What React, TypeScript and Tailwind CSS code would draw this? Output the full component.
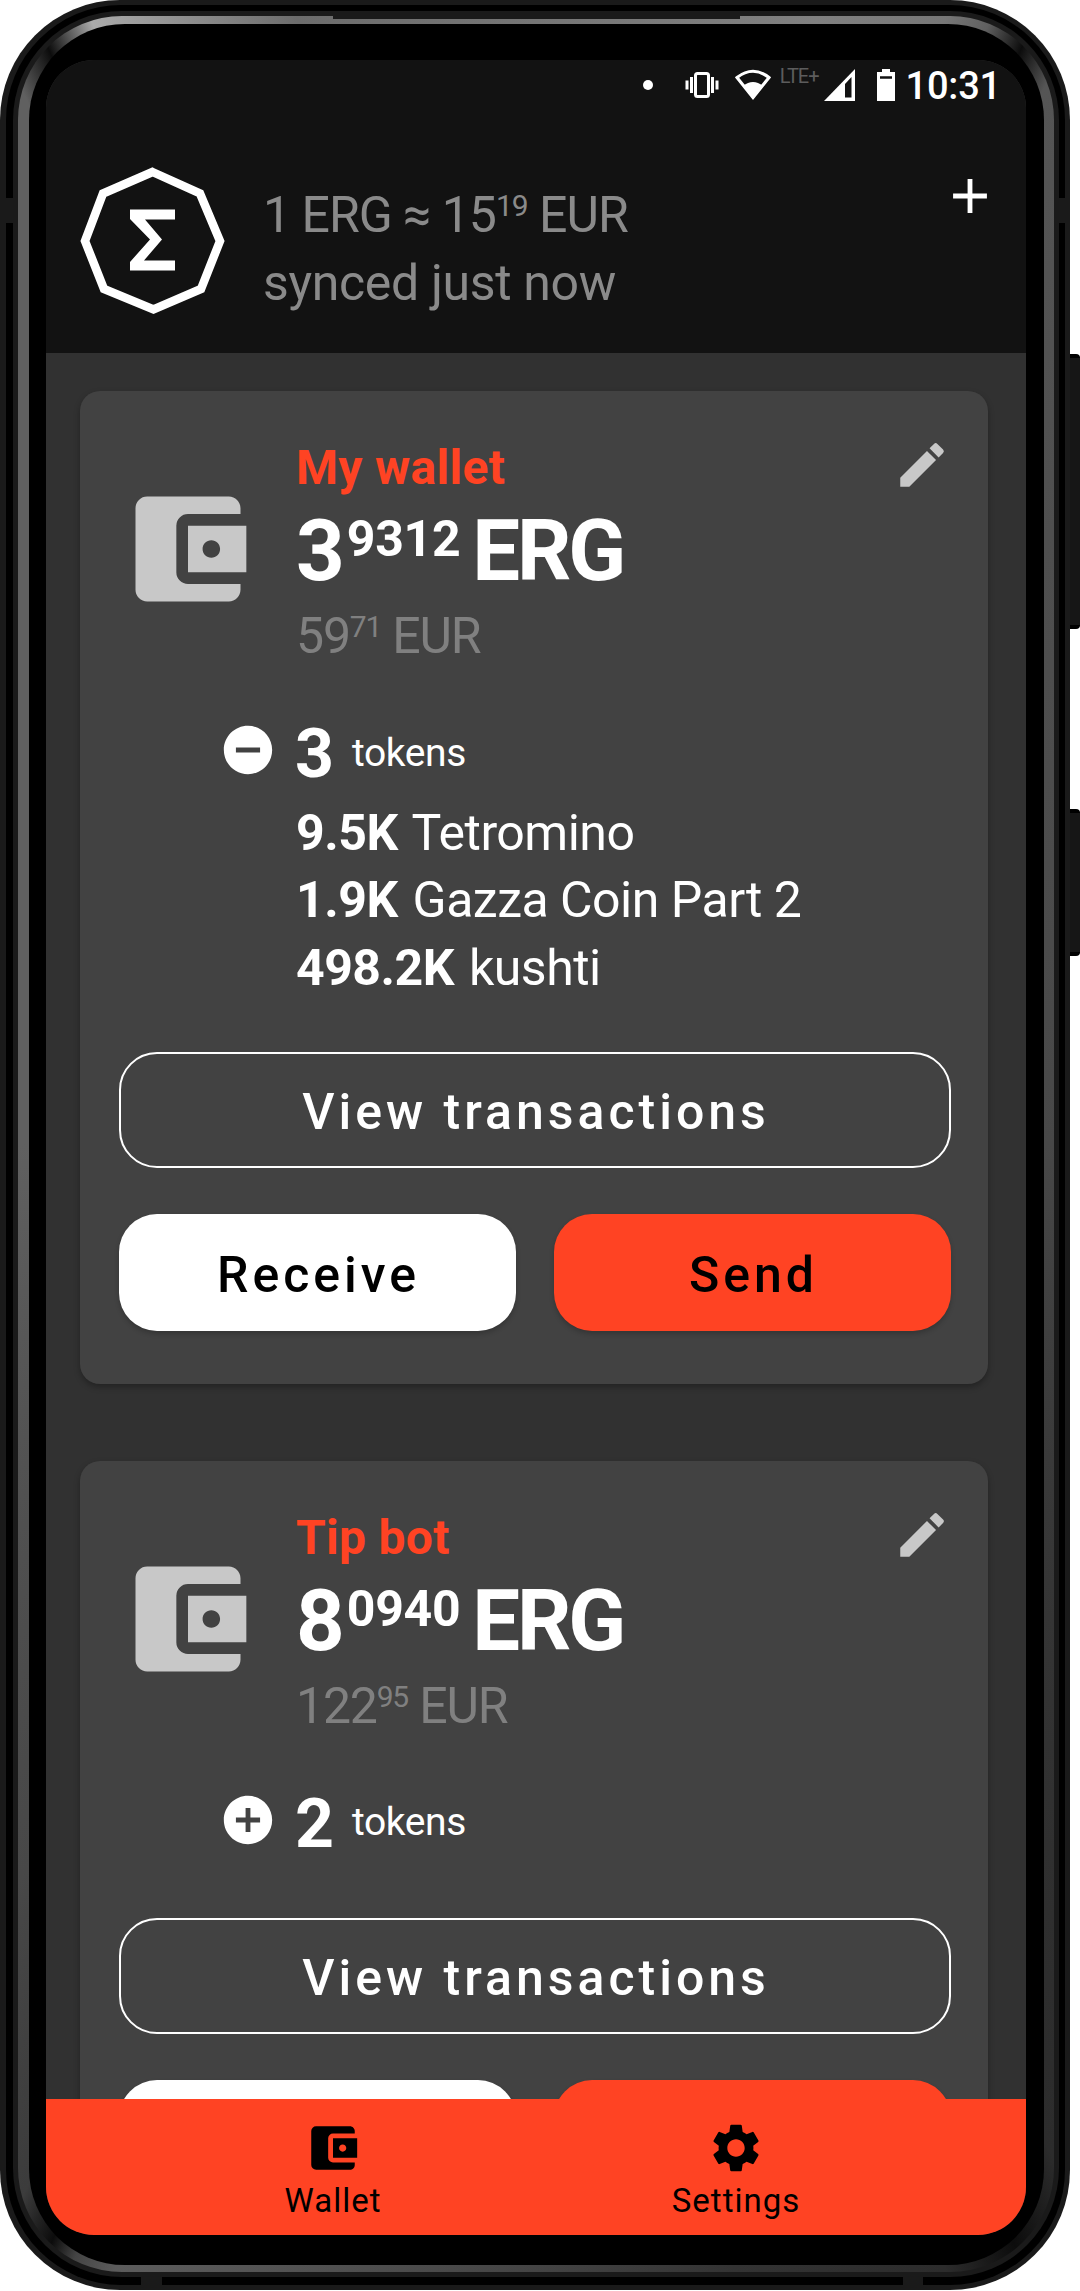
import React from "react";
import { MdAccountBalanceWallet, MdSettings, MdEdit, MdAdd, MdRemoveCircle, MdAddCircle } from "react-icons/md";

type Token = { amount: string; name: string };
type Wallet = {
  name: string;
  whole: string;
  decimals: string;
  fiatWhole: string;
  fiatCents: string;
  tokenCount: number;
  tokens: Token[];
};

const wallets: Wallet[] = [
  {
    name: "My wallet",
    whole: "3",
    decimals: "9312",
    fiatWhole: "59",
    fiatCents: "71",
    tokenCount: 3,
    tokens: [
      { amount: "9.5K", name: "Tetromino" },
      { amount: "1.9K", name: "Gazza Coin Part 2" },
      { amount: "498.2K", name: "kushti" },
    ],
  },
  {
    name: "Tip bot",
    whole: "8",
    decimals: "0940",
    fiatWhole: "122",
    fiatCents: "95",
    tokenCount: 2,
    tokens: [],
  },
];

function StatusBar() {
  return (
    <div className="flex h-[48px] items-center justify-end pr-[25px] pt-[2px] text-white">
      <span className="mr-[31px] size-[10px] rounded-full bg-white" />
      <svg className="mr-[15px] h-[26px] w-[36px]" viewBox="0 0 36 26" fill="none" stroke="#fff">
        <rect x="11.5" y="1.5" width="13" height="23" rx="2" strokeWidth="3" />
        <path d="M7.500 5v16M28.500 5v16" strokeWidth="3" />
        <path d="M3 8.500v9M33 8.500v9" strokeWidth="3" />
      </svg>
      <svg className="mr-[9px] h-[31px] w-[36px]" viewBox="0 0 36 31">
        <path d="M2 8.500Q18-4 34 8.500L18 28.500Z" fill="none" stroke="#fff" strokeWidth="3" />
        <path d="M8 17Q18 9 28 17L18 30Z" fill="#fff" />
      </svg>
      <span className="mr-[5px] -mt-[18px] text-[20px] leading-none tracking-[-1px] text-[#5c5c5c]">LTE+</span>
      <svg className="mr-[22px] h-[32px] w-[31px]" viewBox="0 0 31 32">
        <path d="M0 32L31 0V32Z" fill="#fff" />
        <path d="M21 15L27.500 8V28.500H21Z" fill="#121212" />
      </svg>
      <svg className="mr-[11px] h-[32px] w-[18px]" viewBox="0 0 18 32">
        <path d="M5 0h8v3h5v29H0V3h5z" fill="#fff" />
        <path d="M3 8.500h12" stroke="#121212" strokeWidth="2.500" />
      </svg>
      <span className="pt-[2px] text-[38px] leading-[46px] font-medium tracking-[-0.200px]">10:31</span>
    </div>
  );
}

function Header() {
  return (
    <header className="h-[293px] bg-[#121212]">
      <StatusBar />
      <div className="flex pl-[34px] pt-[58px]">
        <svg className="h-[149px] w-[145px] shrink-0" viewBox="0 0 145 149">
          <path d="M72.500 6L120 27.500L140 75L121 123L73.500 143.500L24 123L5 75L23 27.500Z" fill="none" stroke="#fff" strokeWidth="8.500" />
          <path d="M50 43.500H95V53.500H65L82 73.500L64 94.500H95V104.500H50V96L70 73.500L50 53Z" fill="#fff" />
        </svg>
        <div className="ml-[38px] pt-[15px] text-[50px] leading-[68px] text-[#8a8a8a]">
          <p className="tracking-[-1px] whitespace-nowrap">
            1 ERG ≈ 15<Sup>19</Sup> EUR
          </p>
          <p className="tracking-[-0.350px] whitespace-nowrap">synced just now</p>
        </div>
        <MdAdd className="ml-auto mr-[27px] mt-[1px] size-[58px] text-white" />
      </div>
    </header>
  );
}

function Sup({ children }: { children: React.ReactNode }) {
  return <span className="relative -top-[16px] text-[30px] leading-none">{children}</span>;
}

function WalletCard({ wallet }: { wallet: Wallet }) {
  const expanded = wallet.tokens.length > 0;
  return (
    <section className="flex w-[908px] flex-col rounded-[20px] bg-[#424242] pb-[53px] shadow-[0_3px_6px_rgba(0,0,0,0.3)]">
      <div className="flex h-[291px] pl-[38px] pt-[46px]">
        <MdAccountBalanceWallet className="mt-[42px] size-[140px] shrink-0 text-[#c8c8c8]" />
        <div className="ml-[38px] whitespace-nowrap">
          <h2 className="text-[48px] leading-[61px] font-bold tracking-[0.300px] text-[#ff4323]">{wallet.name}</h2>
          <p className="flex h-[108px] items-baseline text-[85px] leading-[106px] font-bold text-white">
            {wallet.whole}
            <span className="relative -top-[24px] ml-[2px] text-[50px] leading-none tracking-[-0.300px]">{wallet.decimals}</span>
            <span className="ml-[12px] tracking-[-3.200px]">ERG</span>
          </p>
          <p className="text-[50px] leading-[60px] tracking-[-1.200px] text-[#808080]">
            {wallet.fiatWhole}
            <Sup>{wallet.fiatCents}</Sup> EUR
          </p>
        </div>
        <MdEdit className="ml-auto mr-[37px] -mt-px size-[58px] text-[#c8c8c8]" />
      </div>
      <div className="flex h-[136px] items-center pl-[139px] text-white">
        {expanded ? <MdRemoveCircle className="mt-px size-[58px]" /> : <MdAddCircle className="mt-px size-[58px]" />}
        <span className="ml-[18px] pt-[9px] text-[68px] leading-[80px] font-bold">{wallet.tokenCount}</span>
        <span className="ml-[18px] pt-[6px] text-[39px] tracking-[-0.400px]">tokens</span>
      </div>
      {expanded && (
        <ul className="-mt-[18px] mb-[19px] pl-[216px] text-[50px] leading-[67.600px] tracking-[-0.500px] whitespace-nowrap text-white">
          {wallet.tokens.map((t) => (
            <li key={t.name}>
              <b className="mr-[3px]">{t.amount}</b> {t.name}
            </li>
          ))}
        </ul>
      )}
      <div className="pr-[37px] pl-[39px] pt-[30px] text-[50px] font-medium tracking-[4px]">
        <button className="h-[116px] w-full rounded-[38px] border-[2.500px] border-white pt-[6px] pl-[2px] text-white">
          View transactions
        </button>
        <div className="mt-[46px] grid grid-cols-2 gap-[38px] text-black">
          <button className="h-[117px] rounded-[38px] bg-white pt-[6px] pl-[2px] shadow-[0_3px_5px_rgba(0,0,0,0.2)]">Receive</button>
          <button className="h-[117px] rounded-[38px] bg-[#ff4323] pt-[6px] pl-[2px] shadow-[0_3px_5px_rgba(0,0,0,0.2)]">Send</button>
        </div>
      </div>
    </section>
  );
}

function BottomNav() {
  return (
    <nav className="flex h-[136px] shrink-0 justify-center bg-[#ff4323] pt-[20px] pr-[3px] text-[33px] leading-[40px] tracking-[1px] text-black">
      <div className="flex w-[403px] flex-col items-center">
        <MdAccountBalanceWallet className="size-[58px]" />
        <span className="mt-[4px]">Wallet</span>
      </div>
      <div className="flex w-[403px] flex-col items-center">
        <MdSettings className="size-[58px]" />
        <span className="mt-[4px]">Settings</span>
      </div>
    </nav>
  );
}

export default function App() {
  return (
    <div className="relative h-[2291px] w-[1080px] overflow-hidden bg-white font-[Roboto,sans-serif]">
      <div className="absolute top-[354px] left-[1066px] h-[275px] w-[14px] rounded-[4px] border-y-4 border-black bg-[#161616]" />
      <div className="absolute top-[809px] left-[1066px] h-[147px] w-[14px] rounded-[4px] border-y-4 border-black bg-[#161616]" />
      <div className="relative h-[2290px] w-[1070px] rounded-[120px] bg-[#1a1a1a] px-[5.500px] py-[5.300px]">
        <div className="h-full rounded-[115px] bg-black pt-[6px] pr-[5.500px] pb-[8px] pl-[7.500px]">
          <div className="h-full rounded-[109px] bg-[#1a1a1a] px-[5px] pt-[5px] pb-[5px]">
            <div className="h-full rounded-[104px] bg-[conic-gradient(#757575_0deg,#808080_14deg,#777_20deg,#606060_22deg,#0c0c0c_23.900deg,#555_25.700deg,#4f4f4f_40deg,#484848_90deg,#2c2c2c_153deg,#0c0c0c_156.500deg,#2c2c2c_160deg,#333_170deg,#444_180deg,#5c5c5c_200.500deg,#444_202.500deg,#0c0c0c_203.800deg,#3c3c3c_206deg,#484848_215deg,#606060_270deg,#606060_334deg,#0c0c0c_336deg,#aaa_338.400deg,#6c6c6c_348deg,#757575_360deg)] pt-[8px] pr-[10px] pb-[7px] pl-[11px]">
              <div className="h-full rounded-[96px] bg-black pt-[35.500px] pr-[18px] pb-[29.500px] pl-[17px]">
                <main className="flex h-full flex-col overflow-hidden rounded-[48px] bg-[#313131]">
                  <Header />
                  <div className="flex min-h-0 flex-1 flex-col gap-[77px] overflow-hidden pt-[38px] pl-[34px]">
                    {wallets.map((w) => (
                      <div key={w.name} className="shrink-0">
                        <WalletCard wallet={w} />
                      </div>
                    ))}
                  </div>
                  <BottomNav />
                </main>
              </div>
            </div>
          </div>
        </div>
      </div>
      <div className="absolute top-[11px] left-[333px] h-[8px] w-[407px] bg-[#1a1a1a]" />
      <div className="absolute top-[198px] left-0 h-[25px] w-[18px] bg-[#1a1a1a]" />
      <div className="absolute top-[198px] left-[1054px] h-[25px] w-[16px] bg-[#1a1a1a]" />
      <div className="absolute top-[2272px] left-[141px] h-[18px] w-[21px] bg-[#1a1a1a]" />
      <div className="absolute top-[2272px] left-[903px] h-[18px] w-[20px] bg-[#1a1a1a]" />
    </div>
  );
}
